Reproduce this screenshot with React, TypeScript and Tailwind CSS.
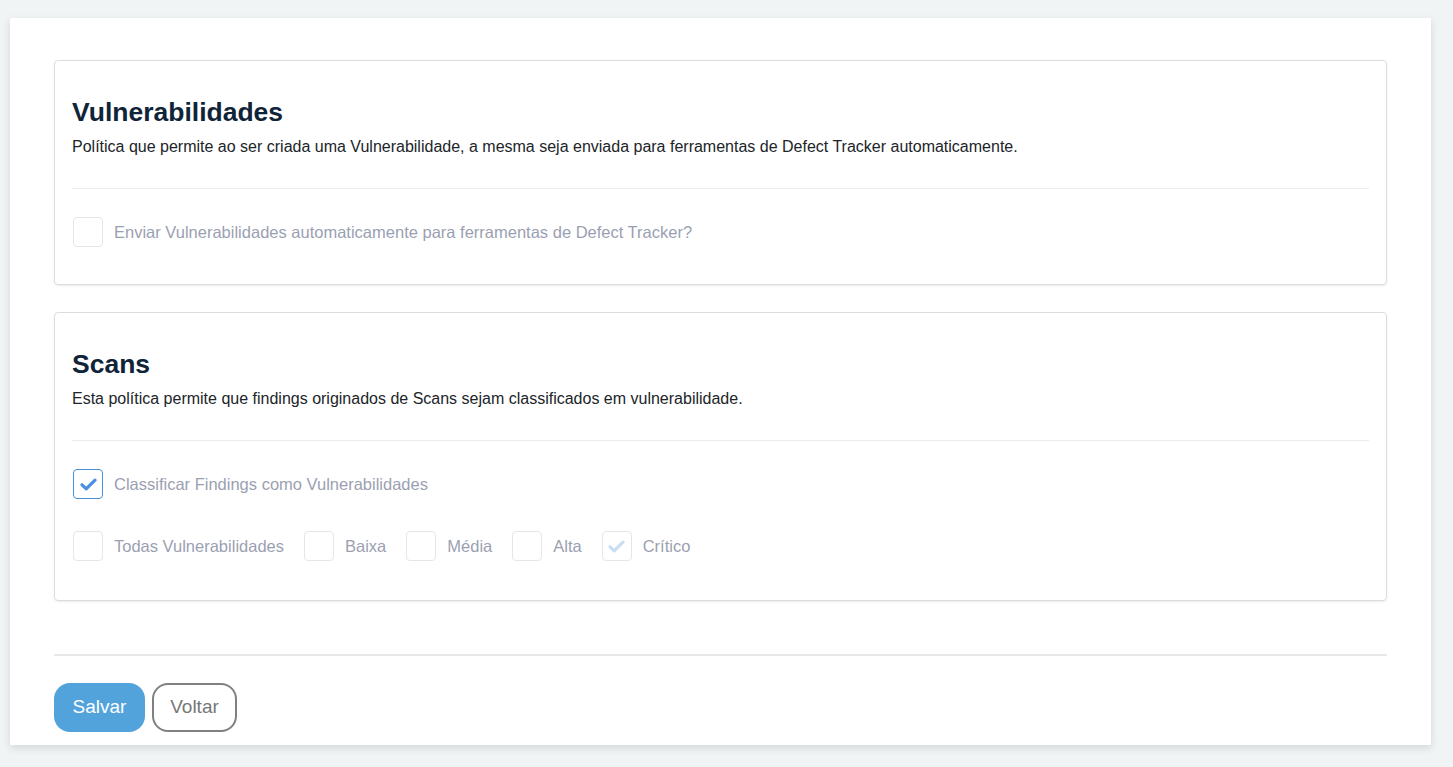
import React from "react";

type CheckProps = {
  checked?: boolean;
  faded?: boolean;
  label: string;
};

function Checkbox({ checked, faded, label }: CheckProps) {
  const active = checked && !faded;
  return (
    <label className="flex items-center gap-[11px] cursor-pointer select-none">
      <span
        className={`w-[30px] h-[30px] rounded-[4px] border flex items-center justify-center bg-white ${
          active ? "border-[#4a90d9]" : "border-[#e3e6ea]"
        }`}
      >
        {checked && (
          <svg width="17" height="13" viewBox="0 0 17 13" fill="none">
            <path
              d="M2 6.8 L6.2 10.8 L15 2.2"
              stroke={faded ? "#c9def3" : "#4a90e2"}
              strokeWidth="3.2"
              strokeLinecap="round"
              strokeLinejoin="round"
            />
          </svg>
        )}
      </span>
      <span className="text-[16.5px] text-[#9b9fb2]">{label}</span>
    </label>
  );
}

function PolicyCard({
  title,
  description,
  children,
}: {
  title: string;
  description: string;
  children: React.ReactNode;
}) {
  return (
    <div className="border border-[#dcdcdc] rounded-[4px] shadow-[0_1px_2px_rgba(0,0,0,0.08)] px-[17px] pt-[36px] pb-[37px]">
      <h2 className="text-[26.5px] leading-[31px] font-bold text-[#0f2439]">{title}</h2>
      <p className="mt-[8px] text-[16px] leading-[22px] text-[#212529]">{description}</p>
      <div className="mt-[30px] border-t border-[#ebebeb]" />
      <div className="mt-[28px] pl-[1px]">{children}</div>
    </div>
  );
}

export default function App() {
  return (
    <div
      className="min-h-screen bg-[#f1f4f5] pt-[18px] pb-[22px] pl-[10px]"
      style={{ fontFamily: '"Liberation Sans", Arial, sans-serif' }}
    >
      <div className="w-[1421px] bg-white shadow-[0_3px_8px_rgba(0,0,0,0.12)] px-[44px] pt-[42px] pb-[13px]">
        <div className="flex flex-col gap-[27px]">
          <PolicyCard
            title="Vulnerabilidades"
            description="Política que permite ao ser criada uma Vulnerabilidade, a mesma seja enviada para ferramentas de Defect Tracker automaticamente."
          >
            <Checkbox label="Enviar Vulnerabilidades automaticamente para ferramentas de Defect Tracker?" />
          </PolicyCard>

          <PolicyCard
            title="Scans"
            description="Esta política permite que findings originados de Scans sejam classificados em vulnerabilidade."
          >
            <div className="flex flex-col gap-[32px] pb-[2px]">
              <Checkbox checked label="Classificar Findings como Vulnerabilidades" />
              <div className="flex items-center gap-x-[20px]">
                <Checkbox label="Todas Vulnerabilidades" />
                <Checkbox label="Baixa" />
                <Checkbox label="Média" />
                <Checkbox label="Alta" />
                <Checkbox checked faded label="Crítico" />
              </div>
            </div>
          </PolicyCard>
        </div>

        <div className="mt-[53px] border-t-2 border-[#e8e8e8]" />

        <div className="mt-[27px] flex items-center gap-[7px]">
          <button
            type="button"
            className="h-[49px] w-[91px] rounded-[16px] bg-[#52a3dc] text-white text-[19px]"
          >
            Salvar
          </button>
          <button
            type="button"
            className="h-[49px] w-[85px] rounded-[16px] border-2 border-[#808080] bg-white text-[#777777] text-[19px]"
          >
            Voltar
          </button>
        </div>
      </div>
    </div>
  );
}
